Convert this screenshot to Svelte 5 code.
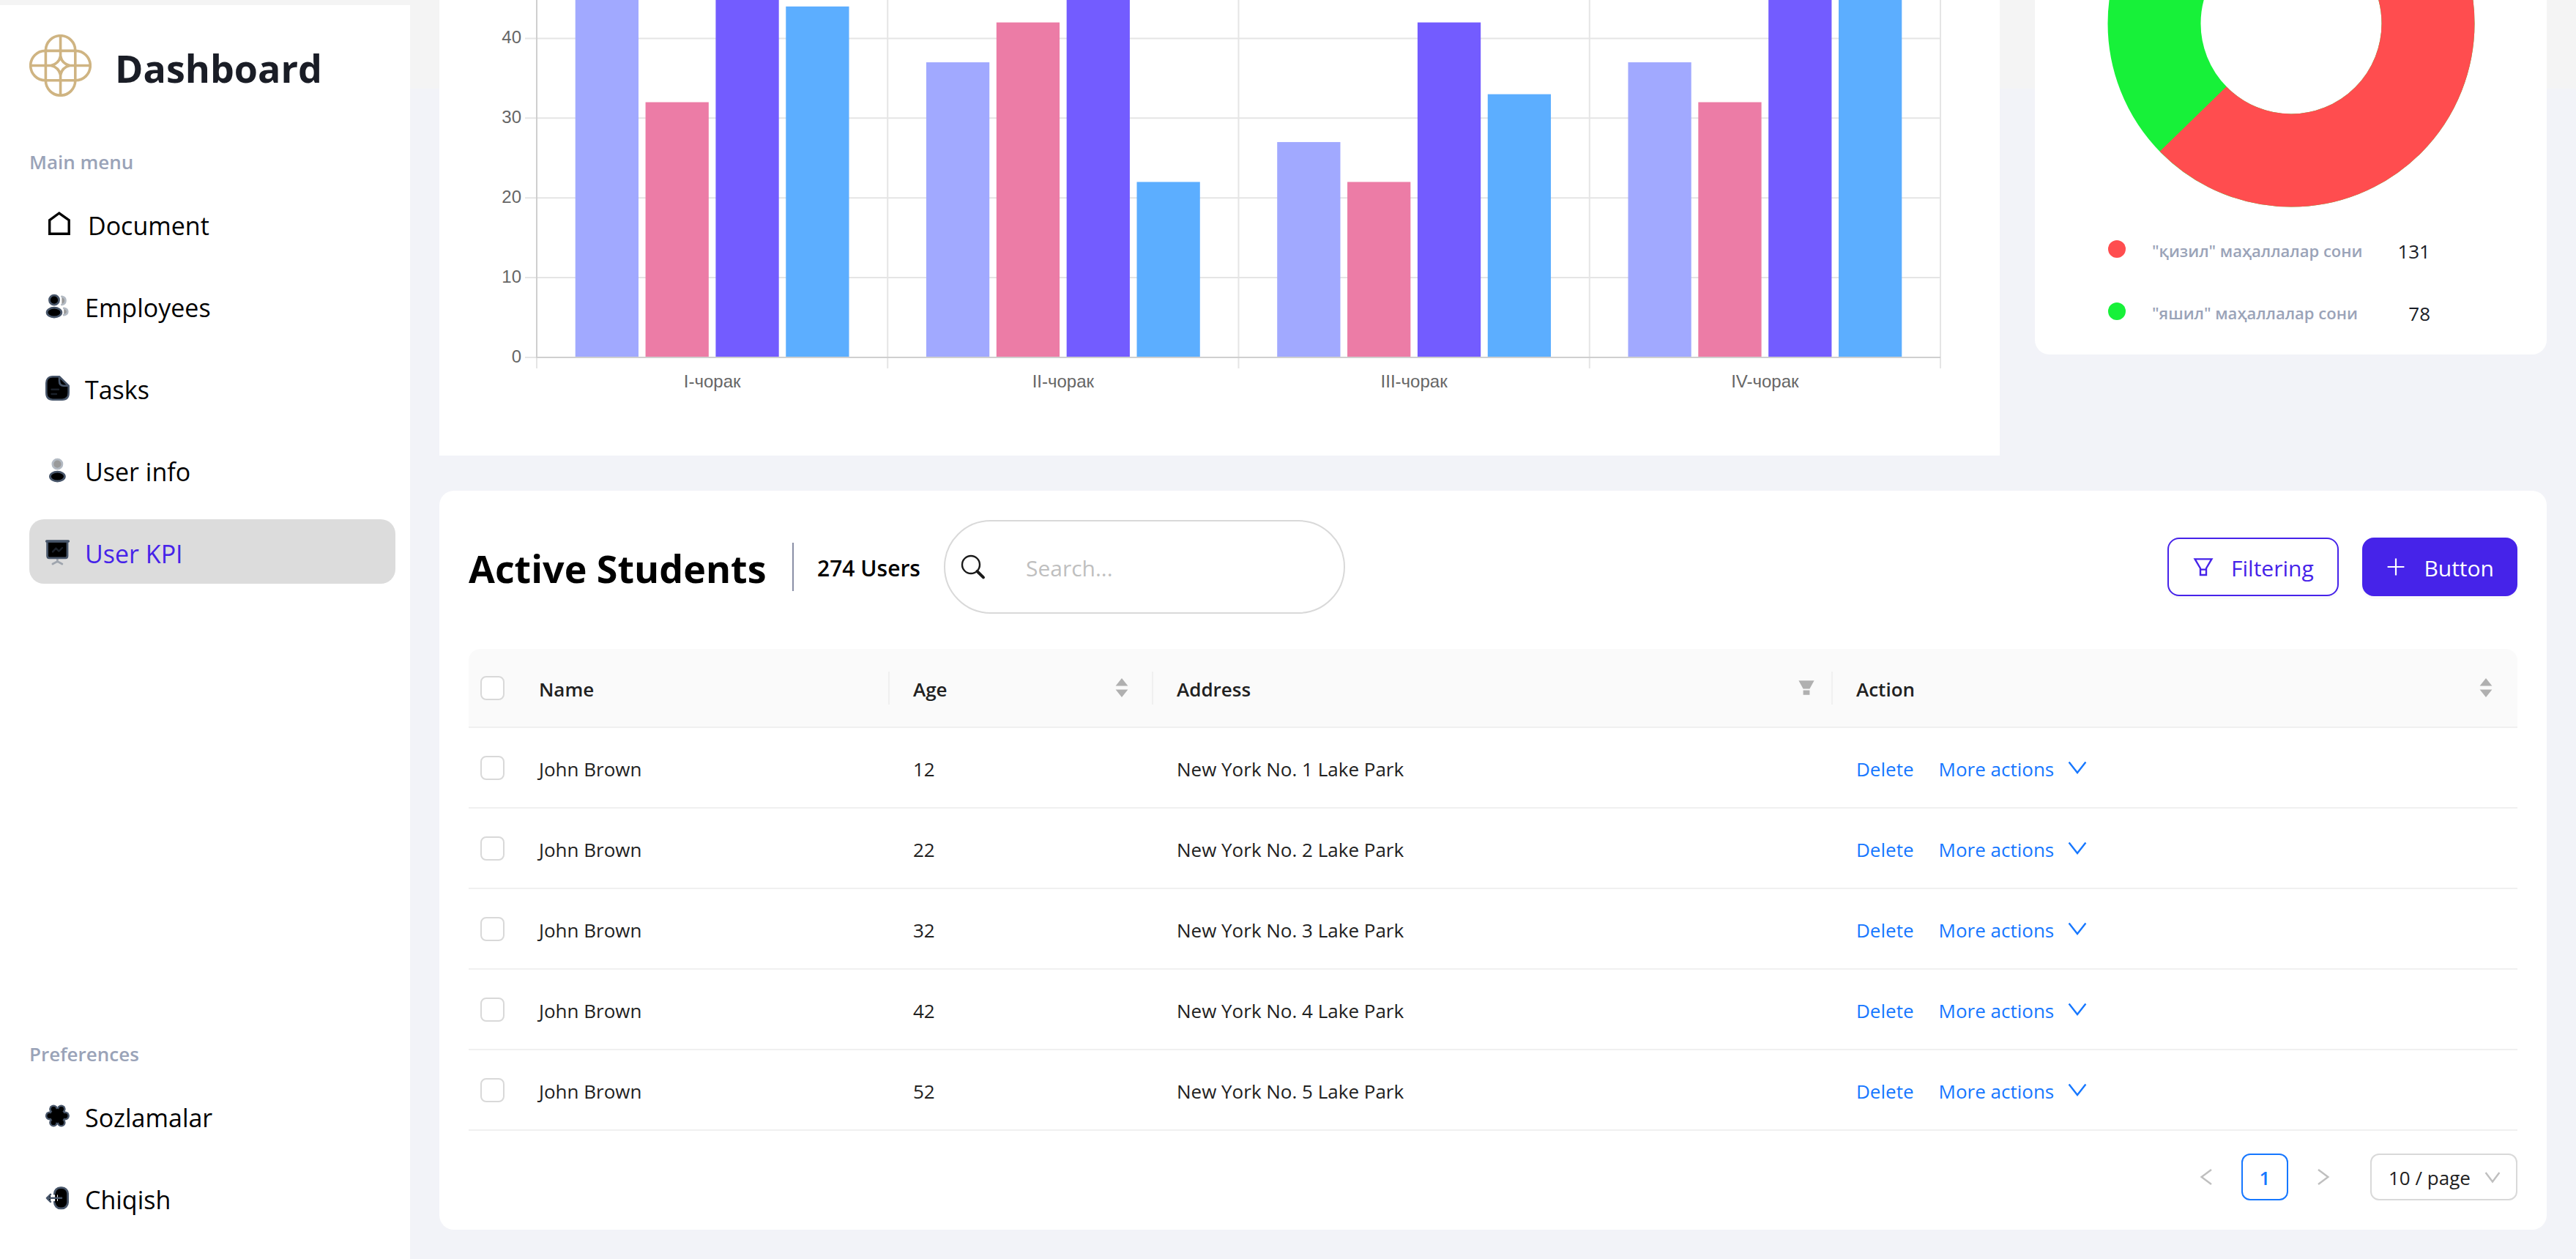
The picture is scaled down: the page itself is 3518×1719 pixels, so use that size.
<script>
  const mainMenu = [
    { label: 'Document', icon: 'home' },
    { label: 'Employees', icon: 'people' },
    { label: 'Tasks', icon: 'note' },
    { label: 'User info', icon: 'user' },
    { label: 'User KPI', icon: 'board', active: true },
  ];
  const preferences = [
    { label: 'Sozlamalar', icon: 'settings' },
    { label: 'Chiqish', icon: 'logout' },
  ];

  // Bar chart geometry, in viewBox units.
  const plot = { left: 133, right: 2050, zero: 488, unit: 10.89 };
  const groups = [
    { label: 'I-чорак', values: [55, 32, 57, 44] },
    { label: 'II-чорак', values: [37, 42, 60, 22] },
    { label: 'III-чорак', values: [27, 22, 42, 33] },
    { label: 'IV-чорак', values: [37, 32, 58, 62] },
  ];
  const barColors = ['#a1a9ff', '#ec7ca6', '#735cff', '#5caeff'];
  const ticks = [0, 10, 20, 30, 40];
  const groupWidth = (plot.right - plot.left) / groups.length;
  const slot = (groupWidth * 0.8) / 4;
  const yOf = (v) => plot.zero - v * plot.unit;
  const barX = (g, b) => plot.left + g * groupWidth + groupWidth * 0.1 + b * slot + slot * 0.05;

  const shares = [
    { label: '"қизил" маҳаллалар сони', value: 131, tone: 'red' },
    { label: '"яшил" маҳаллалар сони', value: 78, tone: 'green' },
  ];
  const ring = { cx: 350, cy: 32, r: 187, width: 127 };
  const around = 2 * Math.PI * ring.r;
  const redShare = 131 / (131 + 78);

  const students = [12, 22, 32, 42, 52].map((age, i) => ({
    name: 'John Brown',
    age,
    address: `New York No. ${i + 1} Lake Park`,
  }));

  const lobes = [0, 60, 120, 180, 240, 300].map((deg) => ({
    x: 20.4 + 10.6 * Math.cos((deg * Math.PI) / 180),
    y: 20.5 + 10.6 * Math.sin((deg * Math.PI) / 180),
  }));
</script>

{#snippet menuIcon(name)}
  {#if name === 'home'}
    <svg class="icon home" viewBox="0 0 44 44" aria-hidden="true">
      <path d="M9.7 36.2V17.6L22.8 8L36.2 17.6V36.2Z" fill="none" stroke="#000" stroke-width="3.4" />
    </svg>
  {:else if name === 'people'}
    <svg class="icon" viewBox="0 0 40 40" aria-hidden="true">
      <path d="M26.4 7.8c3 .6 5 2.8 5 5.6s-2 5-5 5.6" fill="#999" stroke="#b3bac3" stroke-width="2.8" stroke-linecap="round" />
      <path d="M29.2 23.8c3.2.6 5 2.4 5 4.7s-1.8 4.1-5 4.7" fill="#999" stroke="#b3bac3" stroke-width="2.8" stroke-linecap="round" />
      <circle cx="16" cy="12.7" r="6.5" fill="#000" stroke="#475569" stroke-width="2.8" />
      <ellipse cx="16" cy="29.6" rx="9.9" ry="6.4" fill="#000" stroke="#475569" stroke-width="2.8" />
    </svg>
  {:else if name === 'note'}
    <svg class="icon" viewBox="0 0 40 40" aria-hidden="true">
      <path d="M23 5.3H14C8 5.3 5.3 9 5.3 14V27C5.3 33 8 36.7 14 36.7H27C33 36.7 35.7 33 35.7 27V17.7Z" fill="#000" stroke="#475569" stroke-width="2.6" stroke-linejoin="round" />
      <path d="M23 5.3V11C23 15.5 25 17.7 29 17.7H35.7" fill="none" stroke="#475569" stroke-width="2.6" />
      <path d="M12.5 22.7H22M12.5 29H19" stroke="#1b212a" stroke-width="2.4" stroke-linecap="round" />
    </svg>
  {:else if name === 'user'}
    <svg class="icon" viewBox="0 0 40 40" aria-hidden="true">
      <circle cx="20.4" cy="12.7" r="6.5" fill="#999" stroke="#b3bac3" stroke-width="2.8" />
      <ellipse cx="20.4" cy="29.6" rx="10" ry="6.4" fill="#000" stroke="#475569" stroke-width="2.8" />
    </svg>
  {:else if name === 'board'}
    <svg class="icon" viewBox="0 0 40 40" aria-hidden="true">
      <path d="M20.4 30V34M14 37L20.4 33.6L26.8 37" fill="none" stroke="#9fa5ae" stroke-width="2.8" stroke-linecap="round" />
      <path d="M6.6 6.2H34V26C34 28 33 28.8 31.4 28.8H9.2C7.6 28.8 6.6 28 6.6 26Z" fill="#000" stroke="#475569" stroke-width="2.8" />
      <path d="M5.6 6H35.4" stroke="#475569" stroke-width="3.4" stroke-linecap="round" />
      <path d="M14 20.4L18.4 15.6L22.4 19.6L27 15" fill="none" stroke="#1b212a" stroke-width="2.4" stroke-linecap="round" stroke-linejoin="round" />
    </svg>
  {:else if name === 'settings'}
    <svg class="icon" viewBox="0 0 40 40" aria-hidden="true">
      {#each lobes as p}<circle cx={p.x} cy={p.y} r="5.9" fill="#475569" />{/each}
      {#each lobes as p}<circle cx={p.x} cy={p.y} r="3.4" fill="#000" />{/each}
      <circle cx="20.4" cy="20.5" r="9.4" fill="#000" />
    </svg>
  {:else}
    <svg class="icon" viewBox="0 0 40 40" aria-hidden="true">
      <rect x="16.4" y="6.6" width="18.2" height="28.2" rx="8" fill="#000" stroke="#475569" stroke-width="2.8" />
      <path d="M18 16.4V25" stroke="#fff" stroke-width="6" />
      <path d="M18.6 15V27" stroke="#000" stroke-width="3" />
      <path d="M11 16L6 20.8L11 25.6Z" fill="#000" />
      <path d="M26 20.8H6M11 15.8L6 20.8L11 25.8" fill="none" stroke="#475569" stroke-width="2.6" stroke-linecap="round" stroke-linejoin="round" />
    </svg>
  {/if}
{/snippet}

{#snippet menu(items)}
  <ul class="menu">
    {#each items as item}
      <li>
        <a href="#top" class="menu-item" class:active={item.active}>
          {@render menuIcon(item.icon)}
          <span>{item.label}</span>
        </a>
      </li>
    {/each}
  </ul>
{/snippet}

{#snippet sorter(label)}
  <button class="head-icon sorter" type="button" aria-label={label}>
    <svg width="18" height="28" viewBox="0 0 18 28" aria-hidden="true">
      <path d="M9 1L17.4 11.4H.6ZM9 27L.6 16.6H17.4Z" fill="#b0b0b0" />
    </svg>
  </button>
{/snippet}

<div class="app">
  <aside class="sidebar">
    <div class="brand">
      <svg class="logo" viewBox="0 0 85 85" fill="none" stroke="#cfb482" stroke-width="3.6" aria-hidden="true">
        <rect x="22.4" y="1.7" width="40.4" height="81.6" rx="20.2" />
        <rect x="1.7" y="22.4" width="81.6" height="40.4" rx="20.2" />
        <path d="M42.6 1V31M42.6 54V84M1 42.5H31M54 42.5H84" />
        <path d="M42.6 30Q45 40 55 42.5Q45 45 42.6 55Q40 45 30 42.5Q40 40 42.6 30Z" />
      </svg>
      <h1>Dashboard</h1>
    </div>
    <nav class="nav">
      <section>
        <h2>Main menu</h2>
        {@render menu(mainMenu)}
      </section>
      <section>
        <h2>Preferences</h2>
        {@render menu(preferences)}
      </section>
    </nav>
  </aside>

  <main class="main">
    <div class="charts">
      <section class="card bars">
        <svg viewBox="0 0 2131 622" role="img" aria-label="Quarterly values">
          {#each ticks as t}
            <line class="grid" x1={plot.left - 16} x2={plot.right} y1={yOf(t)} y2={yOf(t)} />
            <text class="tick" text-anchor="end" x="112" y={yOf(t) + 7}>{t}</text>
          {/each}
          {#each [0, 1, 2, 3, 4] as i}
            <line class="grid" x1={plot.left + i * groupWidth} x2={plot.left + i * groupWidth} y1="0" y2="503" />
          {/each}
          {#each groups as group, g}
            {#each group.values as v, b}
              <rect x={barX(g, b)} y={yOf(v)} width={slot * 0.9} height={v * plot.unit} fill={barColors[b]} />
            {/each}
            <text class="tick" text-anchor="middle" x={plot.left + (g + 0.5) * groupWidth} y="529">{group.label}</text>
          {/each}
          <path class="axis" d="M{plot.left} 0V{plot.zero}H{plot.right}" />
        </svg>
      </section>

      <section class="card share">
        <svg viewBox="0 0 699 284" role="img" aria-label="Share of neighbourhoods">
          <g transform="rotate(-90 {ring.cx} {ring.cy})" fill="none" stroke-width={ring.width}>
            <circle cx={ring.cx} cy={ring.cy} r={ring.r} stroke="#17f139" />
            <circle
              cx={ring.cx}
              cy={ring.cy}
              r={ring.r}
              stroke="#ff4d4f"
              stroke-dasharray="{around * redShare} {around}"
            />
          </g>
        </svg>
        <ul class="legend">
          {#each shares as s}
            <li>
              <i class="dot {s.tone}"></i>
              <span>{s.label}</span>
              <b>{s.value}</b>
            </li>
          {/each}
        </ul>
      </section>
    </div>

    <section class="card students">
      <header class="toolbar">
        <h2>Active Students</h2>
        <span class="divider"></span>
        <span class="count">274 Users</span>
        <label class="search">
          <svg width="36" height="36" viewBox="0 0 36 36" fill="none" stroke="#1a1a1a" aria-hidden="true">
            <circle cx="15" cy="15" r="12" stroke-width="2.4" />
            <path d="M23.5 24L32 32.4" stroke-width="4" stroke-linecap="round" />
          </svg>
          <input type="text" placeholder="Search..." aria-label="Search students" />
        </label>
        <div class="actions">
          <button type="button" class="btn outline">
            <svg width="28" height="28" viewBox="0 0 28 28" fill="none" stroke="currentColor" stroke-width="2.4" aria-hidden="true">
              <path d="M2.6 3.4H25.4L18 16V25H10V16ZM10 17.6H18" />
            </svg>
            <span>Filtering</span>
          </button>
          <button type="button" class="btn solid">
            <svg width="28" height="28" viewBox="0 0 28 28" stroke="currentColor" stroke-width="2.2" aria-hidden="true">
              <path d="M14 2.6V25.4M2.6 14H25.4" />
            </svg>
            <span>Button</span>
          </button>
        </div>
      </header>

      <table>
        <colgroup>
          <col class="c-check" />
          <col class="c-name" />
          <col class="c-age" />
          <col class="c-address" />
          <col />
        </colgroup>
        <thead>
          <tr>
            <th class="check"><input type="checkbox" aria-label="Select all" /></th>
            <th class="ruled"><div class="head"><span>Name</span></div></th>
            <th class="ruled"><div class="head"><span>Age</span>{@render sorter('Sort by age')}</div></th>
            <th class="ruled">
              <div class="head tight">
                <span>Address</span>
                <button class="head-icon" type="button" aria-label="Filter by address">
                  <svg width="24" height="24" viewBox="0 0 24 24" fill="#b0b0b0" aria-hidden="true">
                    <path d="M1.4 2.2H22.6L16.4 13.6H7.6ZM7.6 15.6H16.4V21.8H7.6Z" />
                  </svg>
                </button>
              </div>
            </th>
            <th><div class="head"><span>Action</span>{@render sorter('Sort by action')}</div></th>
          </tr>
        </thead>
        <tbody>
          {#each students as s}
            <tr>
              <td class="check"><input type="checkbox" aria-label="Select {s.name}, {s.age}" /></td>
              <td>{s.name}</td>
              <td>{s.age}</td>
              <td>{s.address}</td>
              <td>
                <div class="links">
                  <a href="#top">Delete</a>
                  <a href="#top" class="more">
                    More actions
                    <svg width="28" height="28" viewBox="0 0 28 28" fill="none" stroke="currentColor" stroke-width="2.4" aria-hidden="true">
                      <path d="M2.6 5.6L14 20L25.4 5.6" />
                    </svg>
                  </a>
                </div>
              </td>
            </tr>
          {/each}
        </tbody>
      </table>

      <footer class="pager">
        <button type="button" class="arrow" aria-label="Previous page">
          <svg width="24" height="24" viewBox="0 0 24 24" aria-hidden="true"><path d="M19 2L5.6 12L19 22" /></svg>
        </button>
        <button type="button" class="page">1</button>
        <button type="button" class="arrow" aria-label="Next page">
          <svg width="24" height="24" viewBox="0 0 24 24" aria-hidden="true"><path d="M5 2L18.4 12L5 22" /></svg>
        </button>
        <div class="size">
          <select aria-label="Rows per page">
            <option>10 / page</option>
            <option>20 / page</option>
            <option>50 / page</option>
          </select>
          <svg width="24" height="24" viewBox="0 0 24 24" aria-hidden="true"><path d="M2.6 6L12 18.4L21.4 6" /></svg>
        </div>
      </footer>
    </section>
  </main>
</div>

<style>
  :global(body) {
    margin: 0;
    font-family: 'Open Sans', 'Noto Sans', sans-serif;
    color: #212121;
    background: #f2f3f8;
  }

  .app {
    display: flex;
    min-height: 100vh;
    background: linear-gradient(#f4f4f4 121px, #f2f3f8 121px);
  }

  h1,
  h2,
  ul {
    margin: 0;
    padding: 0;
  }

  ul {
    list-style: none;
  }

  a {
    text-decoration: none;
  }

  button,
  input,
  select {
    font: inherit;
    margin: 0;
  }

  button {
    cursor: pointer;
  }

  .sidebar {
    box-sizing: border-box;
    flex: none;
    display: flex;
    flex-direction: column;
    width: 560px;
    margin-top: 7px;
    padding: 40px 20px 40px 40px;
    background: #fff;
  }

  .brand {
    display: flex;
    align-items: center;
    gap: 32px;
    height: 85px;
  }

  .logo {
    width: 85px;
    height: 85px;
  }

  .brand h1 {
    padding-top: 6px;
    font-size: 52px;
    line-height: 72px;
    font-weight: 700;
    color: #1a1d26;
  }

  .nav {
    flex: 1;
    display: flex;
    flex-direction: column;
    justify-content: space-between;
    padding-top: 69px;
  }

  .nav h2 {
    margin-bottom: 20px;
    font-size: 26px;
    line-height: 40px;
    font-weight: 600;
    color: #9aa3b8;
  }

  .menu {
    display: flex;
    flex-direction: column;
    gap: 24px;
  }

  .menu-item {
    display: flex;
    align-items: center;
    gap: 18px;
    height: 88px;
    padding: 0 18px;
    border-radius: 20px;
    font-size: 34px;
    line-height: 48px;
    color: #000;
  }

  .menu-item span {
    padding-top: 6px;
  }

  .menu-item.active {
    background: #dcdcdc;
    color: #4623e9;
  }

  .icon {
    flex: none;
    width: 40px;
    height: 40px;
  }

  .icon.home {
    width: 44px;
    height: 44px;
  }

  .main {
    flex: 1;
    min-width: 0;
    display: flex;
    flex-direction: column;
    gap: 48px;
    padding: 0 40px 40px;
  }

  .charts {
    display: grid;
    grid-template-columns: minmax(0, 1fr) 699px;
    align-items: start;
    gap: 48px;
  }

  .card {
    background: #fff;
  }

  .card > svg {
    display: block;
    width: 100%;
  }

  .grid {
    stroke: #e5e5e5;
    stroke-width: 2;
  }

  .axis {
    fill: none;
    stroke: #cfcfcf;
    stroke-width: 2;
  }

  .tick {
    font-family: 'Liberation Sans', Arial, sans-serif;
    font-size: 24px;
    fill: #666;
  }

  .share {
    padding-bottom: 17px;
    border-radius: 0 0 20px 20px;
  }

  .legend {
    width: 440px;
    padding: 13px 0 0 100px;
  }

  .legend li {
    display: flex;
    align-items: center;
    height: 85px;
  }

  .dot {
    width: 24px;
    height: 24px;
    margin-right: 36px;
    border-radius: 50%;
  }

  .red {
    background: #ff4d4f;
  }

  .green {
    background: #17f139;
  }

  .legend span {
    padding-top: 4px;
    font-size: 22px;
    line-height: 32px;
    font-weight: 600;
    color: #9aa3b8;
  }

  .legend b {
    margin-left: auto;
    padding-top: 6px;
    font-size: 26px;
    line-height: 40px;
    font-weight: 500;
    color: #1a1d26;
  }

  .students {
    padding: 40px;
    border-radius: 20px;
  }

  .toolbar {
    display: flex;
    align-items: center;
    gap: 32px;
    margin-bottom: 48px;
  }

  .toolbar h2 {
    min-width: 410px;
    padding-top: 4px;
    font-size: 52px;
    line-height: 72px;
    font-weight: 700;
    color: #000;
    white-space: nowrap;
  }

  .divider {
    width: 2px;
    height: 66px;
    background: #8a8fa6;
  }

  .count {
    padding-top: 3px;
    font-size: 30px;
    line-height: 44px;
    font-weight: 600;
    color: #000;
    white-space: nowrap;
  }

  .search {
    box-sizing: border-box;
    display: flex;
    align-items: center;
    gap: 54px;
    width: 548px;
    height: 128px;
    padding: 0 32px 0 20px;
    border: 2px solid #d9d9d9;
    border-radius: 64px;
  }

  .search svg {
    flex: none;
  }

  .search input {
    flex: 1;
    min-width: 0;
    padding: 4px 0 0;
    border: 0;
    outline: 0;
    background: none;
    font-size: 30px;
    line-height: 44px;
    color: #212121;
  }

  .search input::placeholder {
    color: #bfbfbf;
    opacity: 1;
  }

  .actions {
    display: flex;
    gap: 32px;
    margin-left: auto;
  }

  .btn {
    box-sizing: border-box;
    display: flex;
    align-items: center;
    justify-content: center;
    gap: 24px;
    height: 80px;
    padding: 0 30px;
    border: 2px solid #4623e9;
    border-radius: 16px;
    font-size: 30px;
    line-height: 44px;
    box-shadow: 0 4px 0 rgba(0, 0, 0, 0.02);
  }

  .btn span {
    padding-top: 3px;
  }

  .outline {
    min-width: 234px;
    background: #fff;
    color: #4623e9;
  }

  .solid {
    background: #4623e9;
    color: #fff;
  }

  table {
    width: 100%;
    table-layout: fixed;
    border-collapse: separate;
    border-spacing: 0;
    font-size: 26px;
    line-height: 44px;
  }

  .c-check {
    width: 64px;
  }

  .c-name {
    width: 511px;
  }

  .c-age {
    width: 360px;
  }

  .c-address {
    width: 928px;
  }

  th,
  td {
    box-sizing: border-box;
    padding: 4px 32px 0;
    border-bottom: 2px solid #f0f0f0;
    text-align: left;
    vertical-align: middle;
  }

  th {
    height: 108px;
    background: #fafafa;
    font-weight: 600;
  }

  th:first-child {
    border-top-left-radius: 16px;
  }

  th:last-child {
    border-top-right-radius: 16px;
  }

  td {
    height: 110px;
  }

  .check {
    padding: 0 16px;
    line-height: 0;
  }

  .check input {
    appearance: none;
    box-sizing: border-box;
    width: 33px;
    height: 33px;
    border: 2px solid #d9d9d9;
    border-radius: 8px;
    background: #fff;
  }

  .ruled {
    background: linear-gradient(#f0f0f0, #f0f0f0) right center / 2px 45px no-repeat #fafafa;
  }

  .head {
    display: flex;
    align-items: center;
    justify-content: space-between;
  }

  .head.tight {
    margin-right: -8px;
  }

  .head-icon {
    display: flex;
    padding: 0 0 4px;
    border: 0;
    background: none;
  }

  .sorter {
    margin-right: 2px;
  }

  .links {
    display: flex;
    gap: 34px;
  }

  .links a {
    color: #1677ff;
  }

  .more {
    display: flex;
    align-items: center;
    gap: 18px;
  }

  .more svg {
    padding-bottom: 2px;
  }

  .pager {
    display: flex;
    justify-content: flex-end;
    margin-top: 31px;
    font-size: 26px;
    line-height: 44px;
  }

  .pager svg {
    fill: none;
    stroke: #bfbfbf;
    stroke-width: 2.4;
  }

  .arrow,
  .page {
    box-sizing: border-box;
    display: flex;
    align-items: center;
    justify-content: center;
    width: 64px;
    height: 64px;
    margin-right: 16px;
    padding: 0;
    border: 0;
    background: none;
  }

  .page {
    padding-top: 2px;
    border: 2px solid #1677ff;
    border-radius: 12px;
    font-weight: 600;
    color: #1677ff;
  }

  .size {
    position: relative;
    margin-left: 16px;
  }

  .size select {
    appearance: none;
    box-sizing: border-box;
    width: 201px;
    height: 64px;
    padding: 2px 48px 0 23px;
    border: 2px solid #d9d9d9;
    border-radius: 12px;
    background: #fff;
    color: #212121;
  }

  .size svg {
    position: absolute;
    top: 20px;
    right: 22px;
    pointer-events: none;
  }
</style>
